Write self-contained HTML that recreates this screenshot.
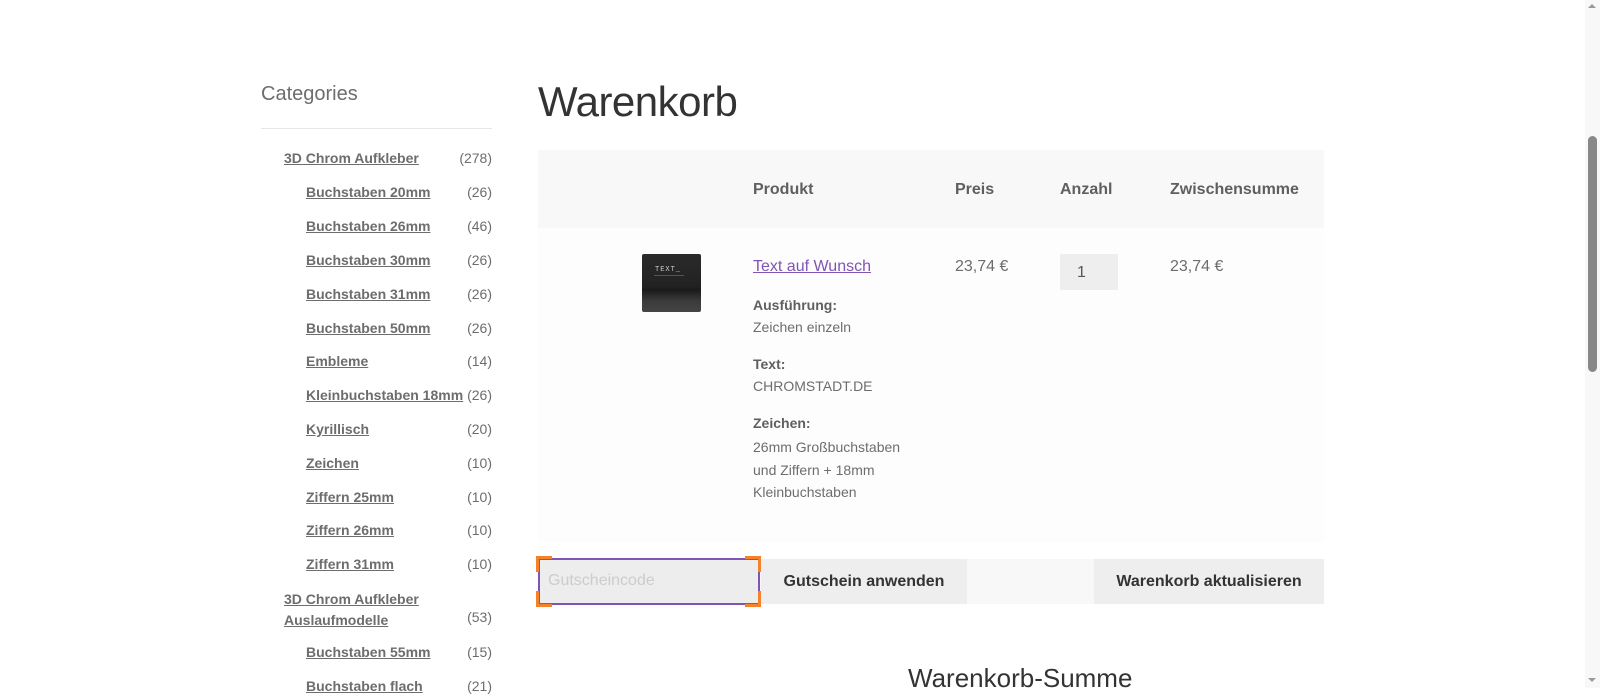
<!DOCTYPE html>
<html><head><meta charset="utf-8"><style>
*{margin:0;padding:0;box-sizing:border-box}
body{width:1600px;height:688px;overflow:hidden;background:#fff;font-family:"Liberation Sans",sans-serif;color:#6d6d6d;position:relative}
.a{position:absolute;white-space:nowrap}
.cat{font-size:14px;font-weight:bold;color:#6d6d6d;text-decoration:underline}
.cnt{font-size:14px;color:#6d6d6d;right:1108px}
.h{font-size:16px;font-weight:bold;color:#5f5f5f}
.t{font-size:14px;color:#6d6d6d}
.b{font-size:14px;font-weight:bold;color:#5f5f5f}
</style></head><body>
<div class="a" style="left:261px;top:83px;font-size:20px;color:#6d6d6d">Categories</div>
<div class="a" style="left:261px;top:128px;width:231px;height:1px;background:#e6e6e6"></div>

<div class="a cat" style="left:284px;top:150px">3D Chrom Aufkleber</div><div class="a cnt" style="top:150px">(278)</div>
<div class="a cat" style="left:306px;top:184px">Buchstaben 20mm</div><div class="a cnt" style="top:184px">(26)</div>
<div class="a cat" style="left:306px;top:218px">Buchstaben 26mm</div><div class="a cnt" style="top:218px">(46)</div>
<div class="a cat" style="left:306px;top:252px">Buchstaben 30mm</div><div class="a cnt" style="top:252px">(26)</div>
<div class="a cat" style="left:306px;top:286px">Buchstaben 31mm</div><div class="a cnt" style="top:286px">(26)</div>
<div class="a cat" style="left:306px;top:320px">Buchstaben 50mm</div><div class="a cnt" style="top:320px">(26)</div>
<div class="a cat" style="left:306px;top:353px">Embleme</div><div class="a cnt" style="top:353px">(14)</div>
<div class="a cat" style="left:306px;top:387px">Kleinbuchstaben 18mm</div><div class="a cnt" style="top:387px">(26)</div>
<div class="a cat" style="left:306px;top:421px">Kyrillisch</div><div class="a cnt" style="top:421px">(20)</div>
<div class="a cat" style="left:306px;top:455px">Zeichen</div><div class="a cnt" style="top:455px">(10)</div>
<div class="a cat" style="left:306px;top:489px">Ziffern 25mm</div><div class="a cnt" style="top:489px">(10)</div>
<div class="a cat" style="left:306px;top:522px">Ziffern 26mm</div><div class="a cnt" style="top:522px">(10)</div>
<div class="a cat" style="left:306px;top:556px">Ziffern 31mm</div><div class="a cnt" style="top:556px">(10)</div>
<div class="a cat" style="left:284px;top:589px;line-height:21px">3D Chrom Aufkleber<br>Auslaufmodelle</div><div class="a cnt" style="top:609px">(53)</div>
<div class="a cat" style="left:306px;top:644px">Buchstaben 55mm</div><div class="a cnt" style="top:644px">(15)</div>
<div class="a cat" style="left:306px;top:678px">Buchstaben flach</div><div class="a cnt" style="top:678px">(21)</div>

<div class="a" style="left:538px;top:78px;font-size:42px;color:#333;letter-spacing:-0.5px">Warenkorb</div>

<div class="a" style="left:538px;top:150px;width:786px;height:78px;background:#f8f8f8"></div>
<div class="a" style="left:538px;top:228px;width:786px;height:314px;background:#fdfdfd"></div>
<div class="a h" style="left:753px;top:181px">Produkt</div>
<div class="a h" style="left:955px;top:181px">Preis</div>
<div class="a h" style="left:1060px;top:181px">Anzahl</div>
<div class="a h" style="left:1170px;top:181px">Zwischensumme</div>

<div class="a" style="left:642px;top:254px;width:59px;height:58px;border-radius:2px;background:linear-gradient(#2a2a2a 0%,#222 55%,#1a1a1a 62%,#3a3a3a 80%,#444 100%)">
<div class="a" style="left:13px;top:12px;font-size:7px;color:#ccc;font-family:'Liberation Mono',monospace;letter-spacing:1px">TEXT_</div>
<div class="a" style="left:12px;top:21px;width:30px;height:1px;background:#555"></div>
</div>
<div class="a" style="left:753px;top:258px;font-size:16px;color:#7f54b3;text-decoration:underline">Text auf Wunsch</div>
<div class="a b" style="left:753px;top:297px">Ausführung:</div>
<div class="a t" style="left:753px;top:319px">Zeichen einzeln</div>
<div class="a b" style="left:753px;top:356px">Text:</div>
<div class="a t" style="left:753px;top:378px">CHROMSTADT.DE</div>
<div class="a b" style="left:753px;top:415px">Zeichen:</div>
<div class="a t" style="left:753px;top:436px;line-height:22.5px">26mm Großbuchstaben<br>und Ziffern + 18mm<br>Kleinbuchstaben</div>
<div class="a" style="left:955px;top:258px;font-size:16px">23,74 €</div>
<div class="a" style="left:1060px;top:254px;width:58px;height:36px;background:#eee;font-size:16px;color:#555;padding:10px 0 0 17px">1</div>
<div class="a" style="left:1170px;top:258px;font-size:16px">23,74 €</div>

<div class="a" style="left:538px;top:559px;width:786px;height:45px;background:#f8f8f8"></div>
<div class="a" style="left:538px;top:558px;width:222px;height:47px;background:#ededed;border:2px solid #7f54b3"></div>
<div class="a" style="left:536px;top:556px;width:16px;height:3px;background:#f5822a"></div>
<div class="a" style="left:536px;top:556px;width:3px;height:16px;background:#f5822a"></div>
<div class="a" style="left:745px;top:556px;width:16px;height:3px;background:#f5822a"></div>
<div class="a" style="left:758px;top:556px;width:3px;height:16px;background:#f5822a"></div>
<div class="a" style="left:536px;top:604px;width:16px;height:3px;background:#f5822a"></div>
<div class="a" style="left:536px;top:591px;width:3px;height:16px;background:#f5822a"></div>
<div class="a" style="left:745px;top:604px;width:16px;height:3px;background:#f5822a"></div>
<div class="a" style="left:758px;top:591px;width:3px;height:16px;background:#f5822a"></div>
<div class="a" style="left:548px;top:572px;font-size:16px;color:#ccc">Gutscheincode</div>
<div class="a" style="left:761px;top:559px;width:206px;height:45px;background:#eee;font-size:16px;font-weight:bold;color:#333;text-align:center;line-height:45px">Gutschein anwenden</div>
<div class="a" style="left:1094px;top:559px;width:230px;height:45px;background:#eee;font-size:16px;font-weight:bold;color:#333;text-align:center;line-height:45px">Warenkorb aktualisieren</div>

<div class="a" style="left:908px;top:663px;font-size:26px;color:#333">Warenkorb-Summe</div>

<div class="a" style="left:1585px;top:0;width:15px;height:688px;background:#f8f8f8"></div>
<div class="a" style="left:1588px;top:136px;width:9px;height:236px;background:#888;border-radius:5px"></div>
<div class="a" style="left:1588px;top:4px;width:0;height:0;border-left:4px solid transparent;border-right:4px solid transparent;border-bottom:4px solid #999"></div>
<div class="a" style="left:1588px;top:678px;width:0;height:0;border-left:4px solid transparent;border-right:4px solid transparent;border-top:4px solid #999"></div>
</body></html>
